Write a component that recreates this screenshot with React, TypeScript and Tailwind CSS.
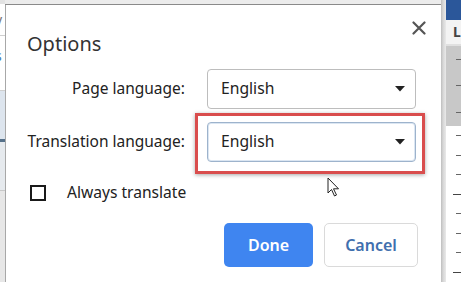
import React from "react";

function Caret() {
  return (
    <svg width="10" height="6" viewBox="0 0 10 6" className="block">
      <path d="M0 0 L10 0 L5 5.5 Z" fill="#222" />
    </svg>
  );
}

function Select({ focused }: { focused?: boolean }) {
  return (
    <div
      className={
        "flex h-[40px] w-[209px] items-center justify-between rounded-[4px] border bg-white pl-[13px] pr-[10px] " +
        (focused ? "border-[#9db3cc] shadow-[inset_0_0_0_1px_#dbe6f2]" : "border-[#bdbdbd]")
      }
    >
      <span className="text-[15.7px] text-[#222]">English</span>
      <Caret />
    </div>
  );
}

export default function App() {
  return (
    <div
      className="flex h-[282px] w-[461px] overflow-hidden bg-white"
      style={{ fontFamily: '"Noto Sans", "Open Sans", sans-serif' }}
    >
      {/* left background strip */}
      <div className="relative flex w-[5px] flex-col bg-white">
        <div className="h-[4px] bg-[#e3e3e3]" />
        <div className="h-[31px] overflow-hidden text-[14px] leading-[31px] text-[#777]">
          <span className="-ml-[5px]">y</span>
        </div>
        <div className="h-px bg-[#cfcfcf]" />
        <div className="h-[54px] overflow-hidden text-[14px] leading-[40px] text-[#3d78b6]">
          <span className="-ml-[5px]">s</span>
        </div>
        <div className="h-px bg-[#cfcfcf]" />
        <div className="h-[48px] bg-[#dde5ee]" />
        <div className="h-[3px] bg-[#56718a]" />
        <div className="h-[48px] bg-[#e6eaee]" />
        <div className="h-px bg-[#c8c8c8]" />
        <div className="flex-1 bg-[#e7e7e7]" />
      </div>

      {/* dialog column */}
      <div className="flex w-[436px] flex-col">
        <div className="h-[4px] bg-[#ececec]" />
        <div className="h-px bg-[#8a8a8a]" />
        <div className="relative flex flex-1 flex-col border-l border-[#a8a8a8] bg-white pl-[21px] pr-[23px]">
          <div className="flex items-start justify-between">
            <div className="mt-[25px] text-[20px] leading-[28px] text-[#333]">Options</div>
            <svg width="14" height="14" viewBox="0 0 14 14" className="mt-[16px] mr-[-8px]">
              <path d="M1.5 1.5 L12.5 12.5 M12.5 1.5 L1.5 12.5" stroke="#555" strokeWidth="2.2" strokeLinecap="round" />
            </svg>
          </div>

          <div className="mt-[11px] grid grid-cols-[158px_209px] gap-x-[22px] gap-y-[13px]">
            <div className="flex h-[40px] items-center justify-end whitespace-nowrap text-[15.5px] text-[#222]">Page language:</div>
            <Select />
            <div className="flex h-[40px] items-center justify-end whitespace-nowrap text-[15.5px] text-[#222]">Translation language:</div>
            <div className="relative">
              <Select focused />
              <div className="pointer-events-none absolute -left-[12px] -right-[9px] -top-[9px] -bottom-[12px] border-[3px] border-[#d94d4d] shadow-[0_1px_4px_rgba(0,0,0,0.35)]" />
            </div>
          </div>

          <div className="mt-[19px] flex h-[24px] items-center">
            <div className="ml-[3px] h-[16px] w-[16px] border-2 border-[#1a1a1a]" />
            <span className="ml-[21px] whitespace-nowrap text-[15.6px] text-[#222]">Always translate</span>
          </div>

          <div className="relative mt-[18px] flex justify-end gap-[11px]">
            <div className="flex h-[44px] w-[89px] items-center justify-center rounded-[5px] bg-[#3f85f0] text-[16px] font-semibold text-white">
              Done
            </div>
            <div className="flex h-[44px] w-[94px] items-center justify-center rounded-[5px] border border-[#dadada] bg-white text-[16px] font-semibold text-[#3f6fae]">
              Cancel
            </div>
            {/* mouse cursor */}
            <svg width="14" height="21" viewBox="0 0 14 21" className="absolute left-[300px] -top-[46px]">
              <path d="M1 1 L1 16 L4.5 12.5 L7.5 19 L9.5 18 L6.5 11.8 L11.5 11.8 Z" fill="white" stroke="#222" strokeWidth="1" strokeLinejoin="round" />
            </svg>
          </div>
        </div>
      </div>

      {/* shadow edge */}
      <div className="w-[5px] bg-[linear-gradient(to_right,#bdbdbd,#d6d6d6_40%,#e9e9e9)]" />

      {/* right background strip */}
      <div className="flex flex-1 flex-col">
        <div className="h-[20px] bg-[#2b579a]" />
        <div className="flex h-[24px] items-center bg-[#f3f3f3] pl-[7px] text-[14px] font-bold leading-none text-[#444]">
          L
        </div>
        <div className="h-[2px] bg-[#e0e0e0]" />
        <div className="flex h-[80px] flex-col justify-around bg-[#c8c8c8] pl-[10px]">
          <div className="h-px w-[5px] bg-[#666]" />
          <div className="h-px w-[5px] bg-[#666]" />
          <div className="h-px w-[5px] bg-[#666]" />
        </div>
        <div className="flex flex-1 flex-col justify-around bg-white pl-[10px]">
          <div className="h-px w-[5px] bg-[#666]" />
          <div className="h-px w-[5px] bg-[#666]" />
          <div className="h-px w-[5px] bg-[#666]" />
          <div className="h-px w-[8px] -ml-[3px] bg-[#444]" />
          <div className="h-px w-[5px] bg-[#666]" />
          <div className="h-px w-[5px] bg-[#666]" />
          <div className="h-px w-[5px] bg-[#666]" />
          <div className="h-px w-[8px] -ml-[3px] bg-[#444]" />
        </div>
      </div>
    </div>
  );
}
